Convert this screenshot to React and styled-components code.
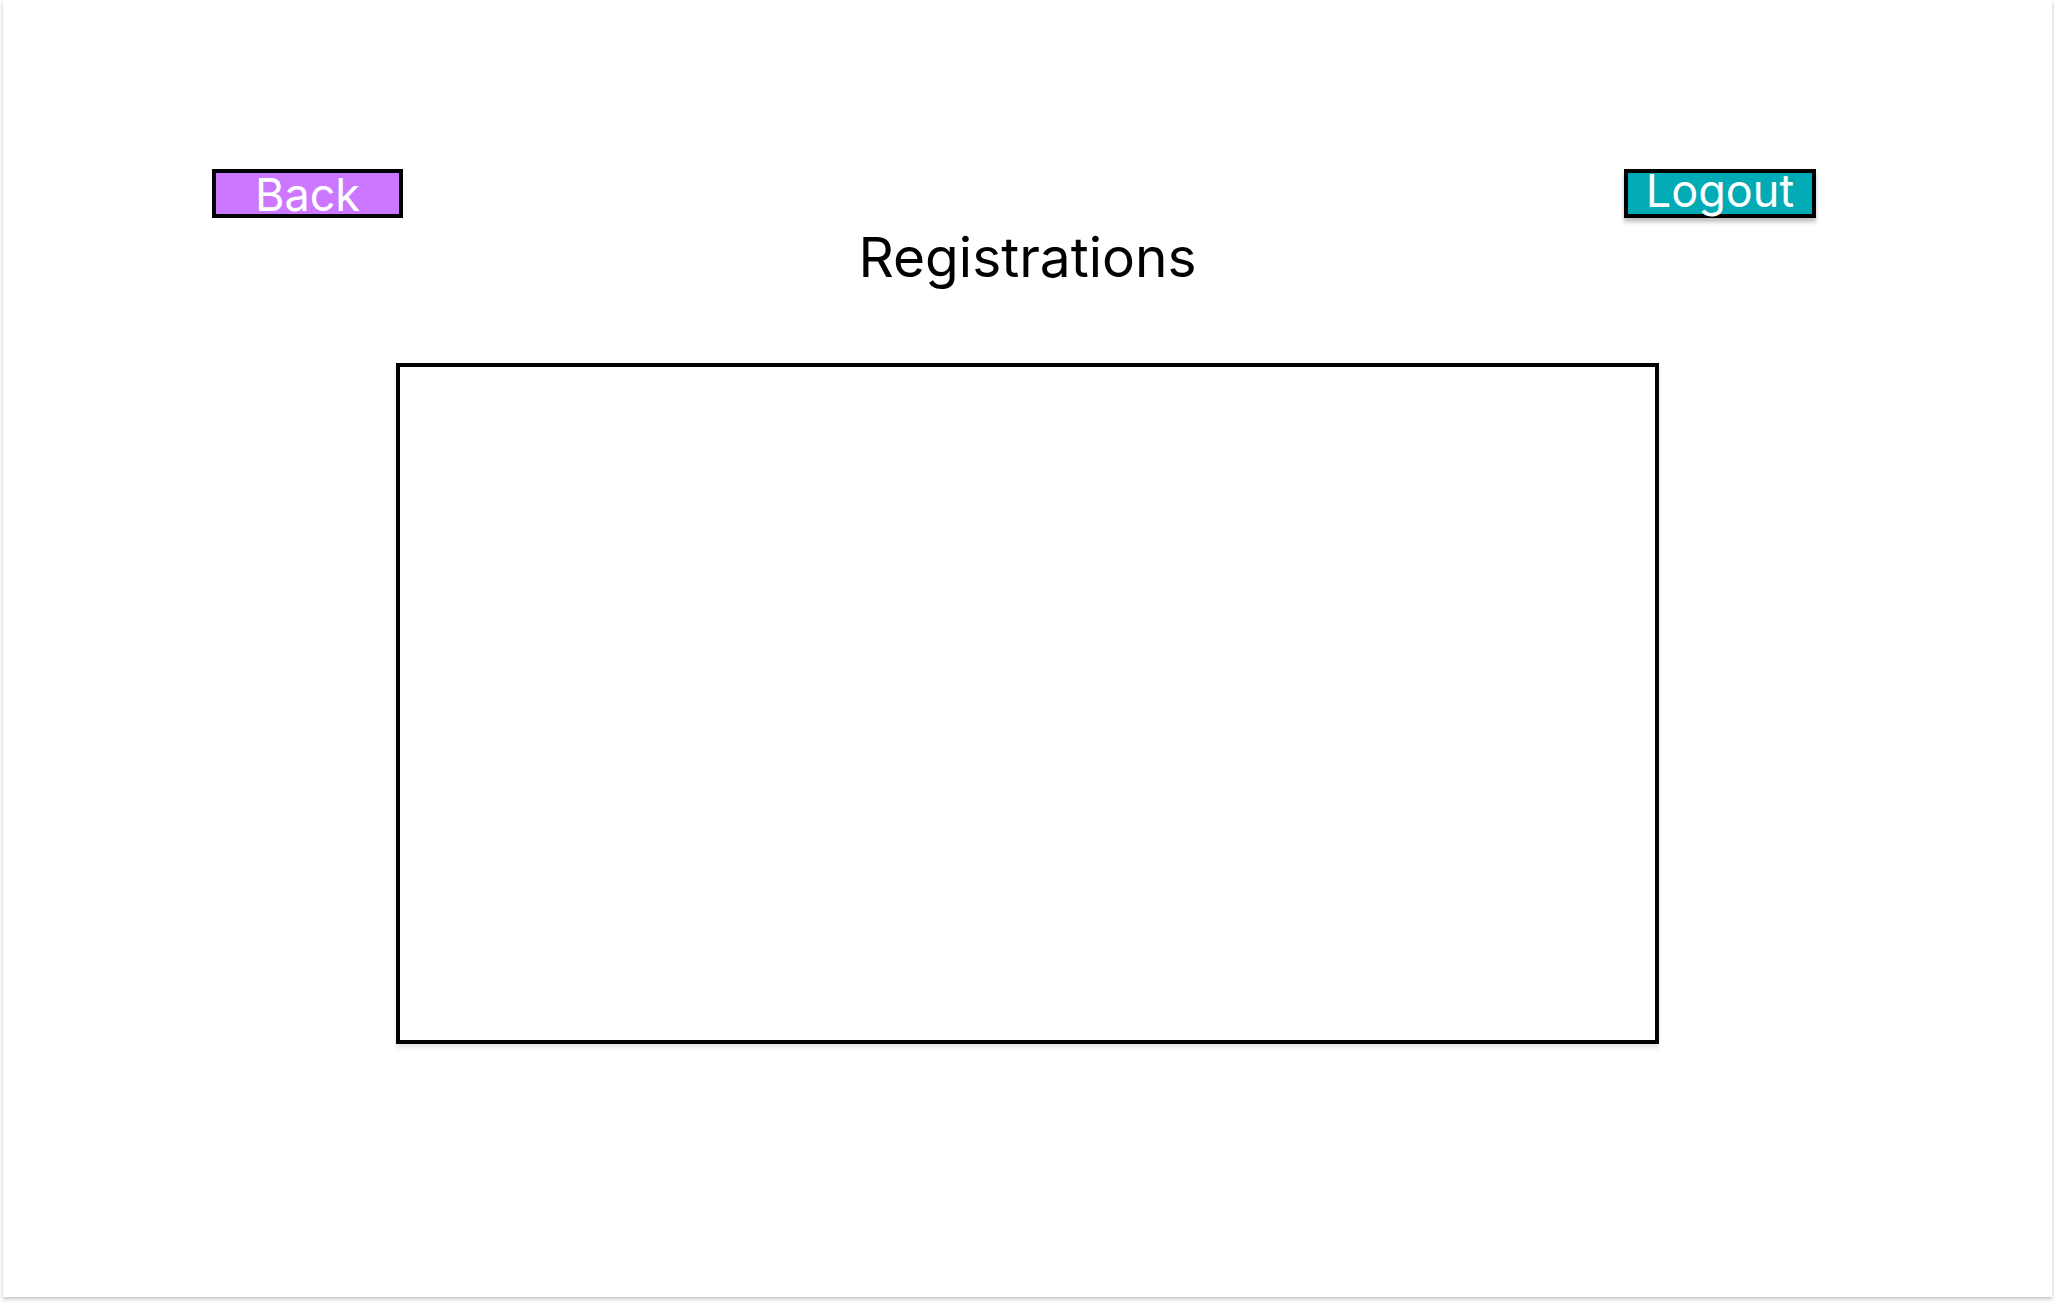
import styled, { createGlobalStyle } from "styled-components";

const GlobalStyle = createGlobalStyle`
  body {
    margin: 0;
    background: #ffffff;
    font-family: Inter, "Noto Sans", sans-serif;
  }
`;

const Page = styled.div`
  width: 2055px;
  height: 1305px;
  overflow: hidden;
  background: #ffffff;
`;

const Card = styled.div`
  display: flex;
  flex-direction: column;
  align-items: center;
  box-sizing: border-box;
  margin-left: 3px;
  width: 2049px;
  height: 1297px;
  padding-top: 169px;
  background: #ffffff;
  box-shadow: 0 2px 4px rgba(0, 0, 0, 0.25);
`;

const TopBar = styled.div`
  display: flex;
  justify-content: space-between;
  align-items: flex-start;
  box-sizing: border-box;
  width: 100%;
  padding: 0 236px 0 209px;
`;

const Button = styled.button`
  display: flex;
  align-items: center;
  justify-content: center;
  box-sizing: border-box;
  width: ${(props) => props.$width}px;
  height: 49px;
  padding: ${(props) => (props.$lift < 0 ? -props.$lift : 0)}px 0
    ${(props) => (props.$lift > 0 ? props.$lift : 0)}px;
  border: 4px solid #000000;
  background-color: ${(props) => props.$color};
  box-shadow: ${(props) => (props.$shadow ? "0 4px 4px rgba(0, 0, 0, 0.25)" : "none")};
  color: #ffffff;
  font-family: Inter, "Noto Sans", sans-serif;
  font-size: ${(props) => props.$size}px;
  line-height: 1;
  overflow: visible;
  &:hover {
    cursor: pointer;
  }
`;

const Title = styled.h1`
  margin: 12px 0 0;
  color: #000000;
  font-family: Inter, "Noto Sans", sans-serif;
  font-weight: 400;
  font-size: 55px;
  line-height: 55px;
`;

const ListBox = styled.div`
  box-sizing: border-box;
  margin-top: 78px;
  width: 1263px;
  height: 681px;
  border: 4px solid #000000;
  background: #ffffff;
  box-shadow: 0 4px 4px rgba(0, 0, 0, 0.1);
`;

function App() {
  return (
    <Page>
      <GlobalStyle />
      <Card>
        <TopBar>
          <Button $width={191} $color="#cc77ff" $size={45} $lift={-2}>
            Back
          </Button>
          <Button $width={192} $color="#00abb5" $size={45} $lift={6} $shadow>
            Logout
          </Button>
        </TopBar>
        <Title>Registrations</Title>
        <ListBox />
      </Card>
    </Page>
  );
}

export default App;
